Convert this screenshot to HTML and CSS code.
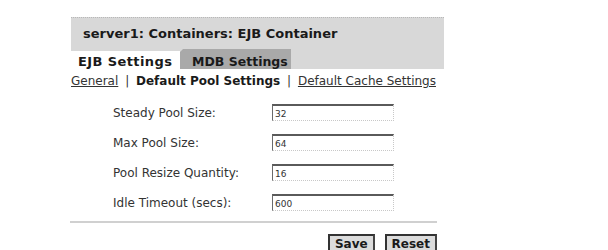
FILE: index.html
```html
<!DOCTYPE html>
<html>
<head>
<meta charset="utf-8">
<link rel="stylesheet" href="styles.css">
</head>
<body>
<div class="panel">
  <div class="header">
    <div class="title">server1: Containers: EJB Container</div>
    <div class="tabs">
      <span class="tab active">EJB Settings</span>
      <span class="tab inactive">MDB Settings</span>
    </div>
  </div>
  <div class="nav">
    <a href="#" class="link">General</a> <span class="sep">|</span> <b>Default Pool Settings</b> <span class="sep">|</span> <a href="#" class="link">Default Cache Settings</a>
  </div>
  <div class="form">
    <div class="row"><label class="label">Steady Pool Size:</label><input class="field" type="text" value="32"></div>
    <div class="row"><label class="label">Max Pool Size:</label><input class="field" type="text" value="64"></div>
    <div class="row"><label class="label">Pool Resize Quantity:</label><input class="field" type="text" value="16"></div>
    <div class="row"><label class="label">Idle Timeout (secs):</label><input class="field" type="text" value="600"></div>
  </div>
  <div class="rule"></div>
  <div class="buttons">
    <button class="btn">Save</button>
    <button class="btn">Reset</button>
  </div>
</div>
</body>
</html>
```

FILE: styles.css
```css
html, body {
  margin: 0;
  padding: 0;
  background: #ffffff;
}
body {
  font-family: "DejaVu Sans", Verdana, sans-serif;
  font-size: 12px;
  color: #222;
}
.panel {
  margin: 17px 0 0 71px;
  width: 373px;
}
.header {
  background: #d8d8d8;
  border-top: 1px dotted #b8b8b8;
  height: 51px;
  display: flex;
  flex-direction: column;
  justify-content: space-between;
}
.title {
  font-weight: bold;
  font-size: 13px;
  line-height: 15px;
  padding: 8px 0 0 12px;
  color: #1a1a1a;
  white-space: nowrap;
}
.tabs {
  display: flex;
  align-items: flex-end;
}
.tab {
  box-sizing: border-box;
  font-weight: bold;
  font-size: 13px;
  line-height: 15px;
  color: #1a1a1a;
  white-space: nowrap;
}
.tab.active {
  background: #ffffff;
  width: 109px;
  height: 18px;
  padding: 3px 0 0 7px;
  letter-spacing: 0.4px;
}
.tab.inactive {
  background: #a9a9a9;
  width: 111px;
  height: 20px;
  padding: 5px 0 0 12px;
  font-size: 12.5px;
  clip-path: polygon(3px 0, 100% 0, 100% 100%, 0 100%, 0 3px);
}
.nav {
  line-height: 14px;
  padding-top: 5px;
  color: #222;
  white-space: nowrap;
}
.link {
  color: #333;
  text-decoration: underline;
}
.sep {
  padding: 0 3px;
  color: #333;
}
.nav b {
  color: #1a1a1a;
}
.form {
  display: flex;
  flex-direction: column;
  gap: 13px;
  padding-top: 16px;
}
.row {
  display: flex;
  align-items: center;
}
.label {
  width: 159px;
  padding-left: 42px;
  color: #333;
  line-height: 14px;
}
.field {
  width: 116px;
  height: 13px;
  padding: 1px 2px 0;
  margin: 0;
  font-family: "DejaVu Sans", Verdana, sans-serif;
  font-size: 9px;
  color: #333;
  background: #fff;
  border-top: 2px solid #5a5a5a;
  border-left: 1px solid #6a6a6a;
  border-right: 1px dotted #c8c8c8;
  border-bottom: 1px dotted #c8c8c8;
  outline: none;
}
.rule {
  margin-top: 10px;
  height: 2px;
  background: #d0d0d0;
  width: 367px;
  margin-left: -1px;
}
.buttons {
  display: flex;
  justify-content: flex-end;
  gap: 10px;
  padding-top: 11px;
  padding-right: 7px;
}
.btn {
  font-family: "DejaVu Sans", Verdana, sans-serif;
  font-size: 12px;
  font-weight: bold;
  color: #1a1a1a;
  background: #dcdcdc;
  border: 2px solid #333;
  border-right-color: #444;
  padding: 1px 5px 2px;
  margin: 0;
  line-height: 14px;
  border-radius: 0;
}
```
